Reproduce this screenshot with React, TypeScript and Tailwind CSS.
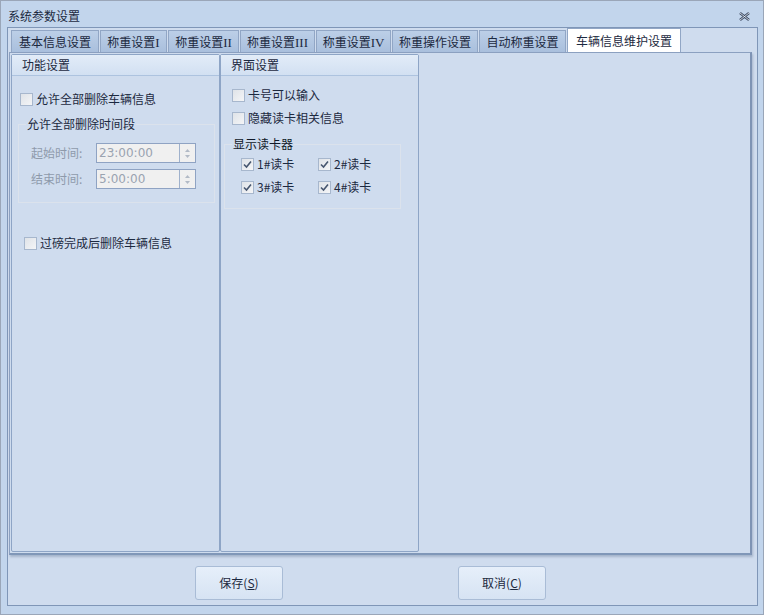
import React from "react";

const FONT = { fontFamily: '"Noto Sans CJK SC", "Noto Sans", sans-serif' };
const SERIF = { fontFamily: '"Liberation Serif", serif' };

function CheckBox({ checked, label, disabled }: { checked?: boolean; label: string; disabled?: boolean }) {
  return (
    <div className="flex items-center h-[16px]">
      <span className="w-[13px] h-[13px] border border-[#a7b7cd] bg-gradient-to-br from-[#dfe3e8] to-[#f4f5f7] flex items-center justify-center shrink-0">
        {checked && (
          <svg width="9" height="9" viewBox="0 0 9 9">
            <path d="M1 4.5 L3.5 7 L8 1.5" fill="none" stroke="#46566f" strokeWidth="1.6" />
          </svg>
        )}
      </span>
      <span className={`ml-[3px] text-[12px] leading-[16px] ${disabled ? "text-[#8d99aa]" : "text-[#1c2940]"}`}>{label}</span>
    </div>
  );
}

function TimeBox({ label, value }: { label: string; value: string }) {
  return (
    <div className="flex items-center h-[20px]">
      <span className="w-[65px] text-[12px] text-[#8e9aab]">{label}</span>
      <div className="flex w-[100px] h-[20px] border border-[#8fa3c3] bg-[#f0f0f0]">
        <span className="flex-1 pl-[2px] text-[12px] leading-[18px] text-[#9aa3b0]" style={{ fontFamily: '"DejaVu Sans", sans-serif' }}>
          {value}
        </span>
        <div className="w-[16px] border-l border-[#9fb1cc] flex flex-col items-center justify-center gap-[3px]">
          <svg width="5" height="3" viewBox="0 0 5 3"><path d="M0 3 L2.5 0 L5 3 Z" fill="#b2bac6" /></svg>
          <svg width="5" height="3" viewBox="0 0 5 3"><path d="M0 0 L2.5 3 L5 0 Z" fill="#b2bac6" /></svg>
        </div>
      </div>
    </div>
  );
}

function PanelHeader({ title }: { title: string }) {
  return (
    <div className="h-[21px] bg-gradient-to-b from-[#e2ecf8] to-[#d2e0f2] border-b border-[#adc3df] pl-[10px] text-[12px] leading-[20px] text-[#1c2940]">
      {title}
    </div>
  );
}

// [text, roman numeral, width class]
const tabs: [string, string, string][] = [
  ["基本信息设置", "", "w-[88px]"],
  ["称重设置", "I", "w-[67px]"],
  ["称重设置", "II", "w-[71px]"],
  ["称重设置", "III", "w-[75px]"],
  ["称重设置", "IV", "w-[75px]"],
  ["称重操作设置", "", "w-[86px]"],
  ["自动称重设置", "", "w-[87px]"],
];

export default function App() {
  return (
    <div className="w-[764px] h-[615px] bg-[#c2d5ec] border border-[#9aa6b8] flex flex-col" style={FONT}>
      {/* title bar */}
      <div className="h-[26px] flex items-center justify-between pl-[7px] pr-[13px]">
        <span className="text-[12px] text-[#1c2940] pt-[4px]">系统参数设置</span>
        <svg width="11" height="9" viewBox="0 0 11 9" className="mt-[5px]">
          <path d="M1 1 L10 8 M10 1 L1 8" stroke="#3a4860" strokeWidth="2.4" />
          <path d="M1 1 L10 8 M10 1 L1 8" stroke="#eef3f9" strokeWidth="0.8" />
        </svg>
      </div>

      {/* frame */}
      <div className="ml-[6px] w-[751px] h-[579px] border border-[#7f96b7] bg-[#cfdcee] flex flex-col">
        {/* tab strip */}
        <div className="flex items-end h-[24px] pl-[3px]">
          {tabs.map(([t, r, w]) => (
            <div
              key={t + r}
              className={`h-[22px] ${w} shrink-0 mr-[1px] border border-b-0 border-[#91a6c5] bg-gradient-to-b from-[#bccfe7] to-[#a9bfdd] text-[12px] leading-[21px] text-[#1c2940] whitespace-nowrap text-center`}
            >
              {t}
              {r && <span className="text-[13px]" style={SERIF}>{r}</span>}
            </div>
          ))}
          <div className="h-[24px] w-[114px] shrink-0 border border-b-0 border-[#91a6c5] bg-white text-[12px] leading-[23px] text-[#1c2940] whitespace-nowrap text-center">
            车辆信息维护设置
          </div>
        </div>

        {/* tab page */}
        <div className="ml-[1px] w-[743px] h-[503px] border border-[#8ba0c0] border-r-[2px] border-r-[#7e93b4] border-b-[2px] border-b-[#8097b8] flex p-[1px] shadow-[1px_2px_2px_rgba(90,110,140,0.35)]">
          {/* 功能设置 */}
          <div className="w-[209px] h-full border-[1.5px] border-[#8ea5c6] rounded-[2px] flex flex-col">
            <PanelHeader title="功能设置" />
            <div className="pl-[8px] pt-[15px] flex flex-col">
              <CheckBox label="允许全部删除车辆信息" />
              <fieldset className="mt-[8px] -ml-[2px] mr-[4px] h-[88px] border border-[#dbe2ec]">
                <legend className="ml-[7px] px-[1px] text-[12px] text-[#1c2940]">允许全部删除时间段</legend>
                <div className="mt-[10px] pl-[12px] flex flex-col gap-[6px]">
                  <TimeBox label="起始时间:" value="23:00:00" />
                  <TimeBox label="结束时间:" value="5:00:00" />
                </div>
              </fieldset>
              <div className="mt-[32px] pl-[4px]">
                <CheckBox label="过磅完成后删除车辆信息" />
              </div>
            </div>
          </div>

          {/* 界面设置 */}
          <div className="w-[199px] h-full border-[1.5px] border-[#8ea5c6] rounded-[2px] flex flex-col">
            <PanelHeader title="界面设置" />
            <div className="pl-[11px] pt-[11px] flex flex-col">
              <CheckBox label="卡号可以输入" />
              <div className="mt-[7px]">
                <CheckBox label="隐藏读卡相关信息" />
              </div>
              <fieldset className="mt-[9px] -ml-[8px] mr-[17px] h-[74px] border border-[#dbe2ec]">
                <legend className="ml-[7px] px-[1px] text-[12px] text-[#101828]">显示读卡器</legend>
                <div className="mt-[3px] pl-[16px] grid grid-cols-[77px_77px] gap-y-[7px]">
                  <CheckBox checked label="1#读卡" />
                  <CheckBox checked label="2#读卡" />
                  <CheckBox checked label="3#读卡" />
                  <CheckBox checked label="4#读卡" />
                </div>
              </fieldset>
            </div>
          </div>
        </div>

        {/* buttons */}
        <div className="flex items-start pt-[11px] pl-[187px] gap-[175px]">
          {["保存", "取消"].map((b, i) => (
            <button
              key={b}
              className="w-[88px] h-[34px] rounded-[3px] border border-[#a9bcd6] bg-gradient-to-b from-[#e6effa] to-[#d6e3f3] text-[12px] text-[#1c2940]"
            >
              {b}(<span className="underline">{i === 0 ? "S" : "C"}</span>)
            </button>
          ))}
        </div>
      </div>
    </div>
  );
}
